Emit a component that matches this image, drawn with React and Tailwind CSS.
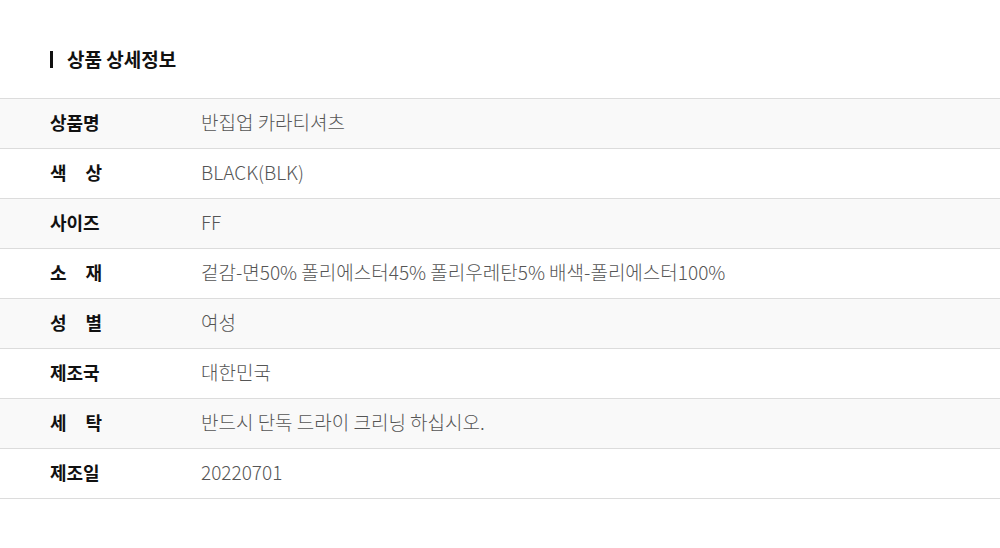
const rows = [
  { label: ["상품명"], value: "반집업 카라티셔츠" },
  { label: ["색", "상"], value: "BLACK(BLK)" },
  { label: ["사이즈"], value: "FF" },
  { label: ["소", "재"], value: "겉감-면50% 폴리에스터45% 폴리우레탄5% 배색-폴리에스터100%" },
  { label: ["성", "별"], value: "여성" },
  { label: ["제조국"], value: "대한민국" },
  { label: ["세", "탁"], value: "반드시 단독 드라이 크리닝 하십시오." },
  { label: ["제조일"], value: "20220701" },
];

export default function App() {
  return (
    <div
      className="w-[1000px] h-[548px] bg-white"
      style={{ fontFamily: '"Noto Sans CJK KR", "Noto Sans", sans-serif' }}
    >
      <div className="pt-[48px] pl-[50px] h-[98px] flex items-start">
        <div className="flex items-center h-[22px]">
          <span className="w-[3px] h-[17px] bg-[#111] mr-[14px]" />
          <span className="text-[19px] font-bold text-[#111] leading-[22px]">
            상품 상세정보
          </span>
        </div>
      </div>
      <div className="border-t border-[#dcdcdc]">
        {rows.map((r, i) => (
          <div
            key={i}
            className={`h-[50px] flex items-center pb-[3px] border-b border-[#dcdcdc] ${
              i % 2 === 0 ? "bg-[#f9f9f9]" : "bg-white"
            }`}
          >
            <div className="w-[201px] shrink-0 pl-[50px]">
              <div className="w-[52px] flex justify-between text-[18px] font-bold text-[#111] leading-[24px]">
                {r.label.map((c, j) => (
                  <span key={j}>{c}</span>
                ))}
              </div>
            </div>
            <div className="text-[19px] font-light text-[#555] leading-[24px]">
              {r.value}
            </div>
          </div>
        ))}
      </div>
    </div>
  );
}
